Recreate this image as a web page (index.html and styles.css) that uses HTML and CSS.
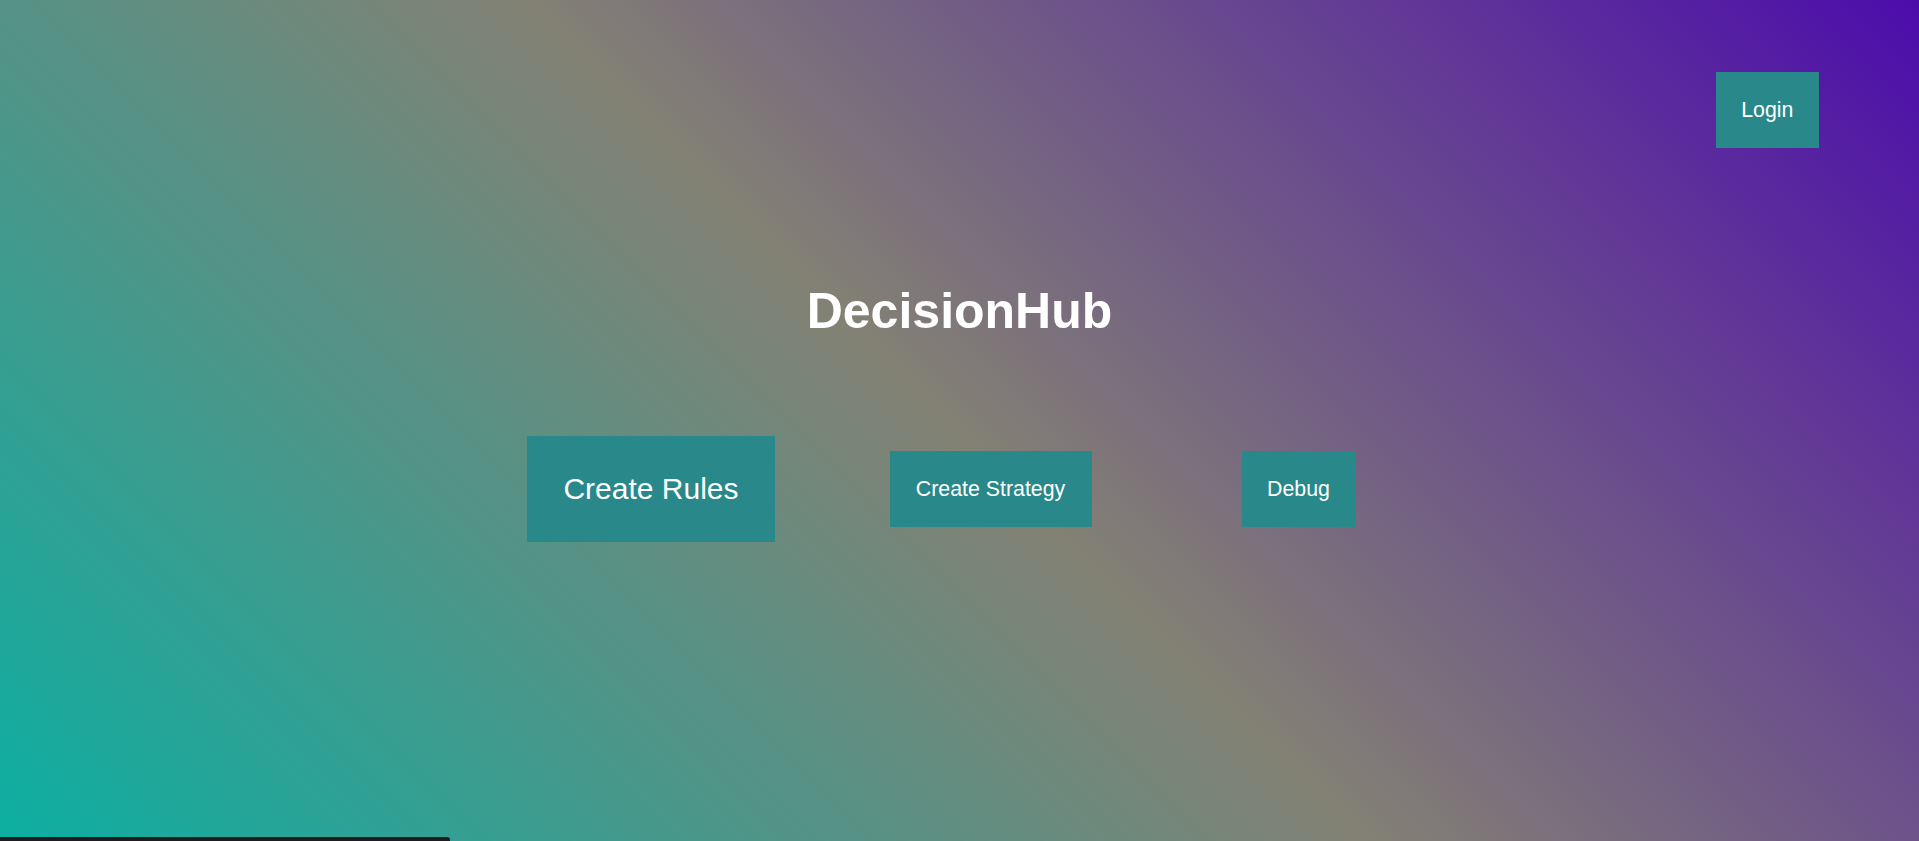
FILE: index.html
```html
<!DOCTYPE html>
<html lang="en">
<head>
<meta charset="utf-8">
<title>DecisionHub</title>
<link rel="stylesheet" href="styles.css">
</head>
<body>
<div class="page">
  <header class="topbar">
    <button class="btn">Login</button>
  </header>
  <h1 class="title">DecisionHub</h1>
  <nav class="actions">
    <button class="btn btn-large">Create Rules</button>
    <button class="btn btn-strategy">Create Strategy</button>
    <button class="btn btn-debug">Debug</button>
  </nav>
</div>
<div class="scrollbar"></div>
</body>
</html>
```
FILE: styles.css
```css
html, body {
  margin: 0;
  padding: 0;
  height: 100%;
}

body {
  font-family: "Liberation Sans", Arial, sans-serif;
  color: #ffffff;
  background: linear-gradient(45deg, #0cafa2 0%, #838174 49.5%, #4c0cab 100%);
  overflow: hidden;
}

.page {
  display: flex;
  flex-direction: column;
  min-height: 100vh;
}

.topbar {
  display: flex;
  justify-content: flex-end;
  padding: 72px 100px 0 0;
}

.btn {
  font-family: "Liberation Sans", Arial, sans-serif;
  font-size: 21.33px;
  line-height: normal;
  color: #ffffff;
  background: #28888a;
  border: none;
  border-radius: 0;
  padding: 25.6px;
  margin: 0;
  cursor: pointer;
}

.title {
  margin: 134px 0 0 0;
  text-align: center;
  font-size: 50px;
  font-weight: bold;
  line-height: normal;
}

.actions {
  display: flex;
  align-items: center;
  justify-content: center;
  padding-right: 36px;
  margin-top: 96px;
}

.btn-large {
  font-size: 30px;
  padding: 36px;
}

.btn-strategy {
  margin-left: 115px;
  padding-left: 26.3px;
  padding-right: 26.3px;
}

.btn-debug {
  margin-left: 150px;
}

.scrollbar {
  position: fixed;
  left: 0;
  bottom: 0;
  width: 450px;
  height: 4px;
  background: #1b1e1e;
  border-top-right-radius: 3px;
}
```
